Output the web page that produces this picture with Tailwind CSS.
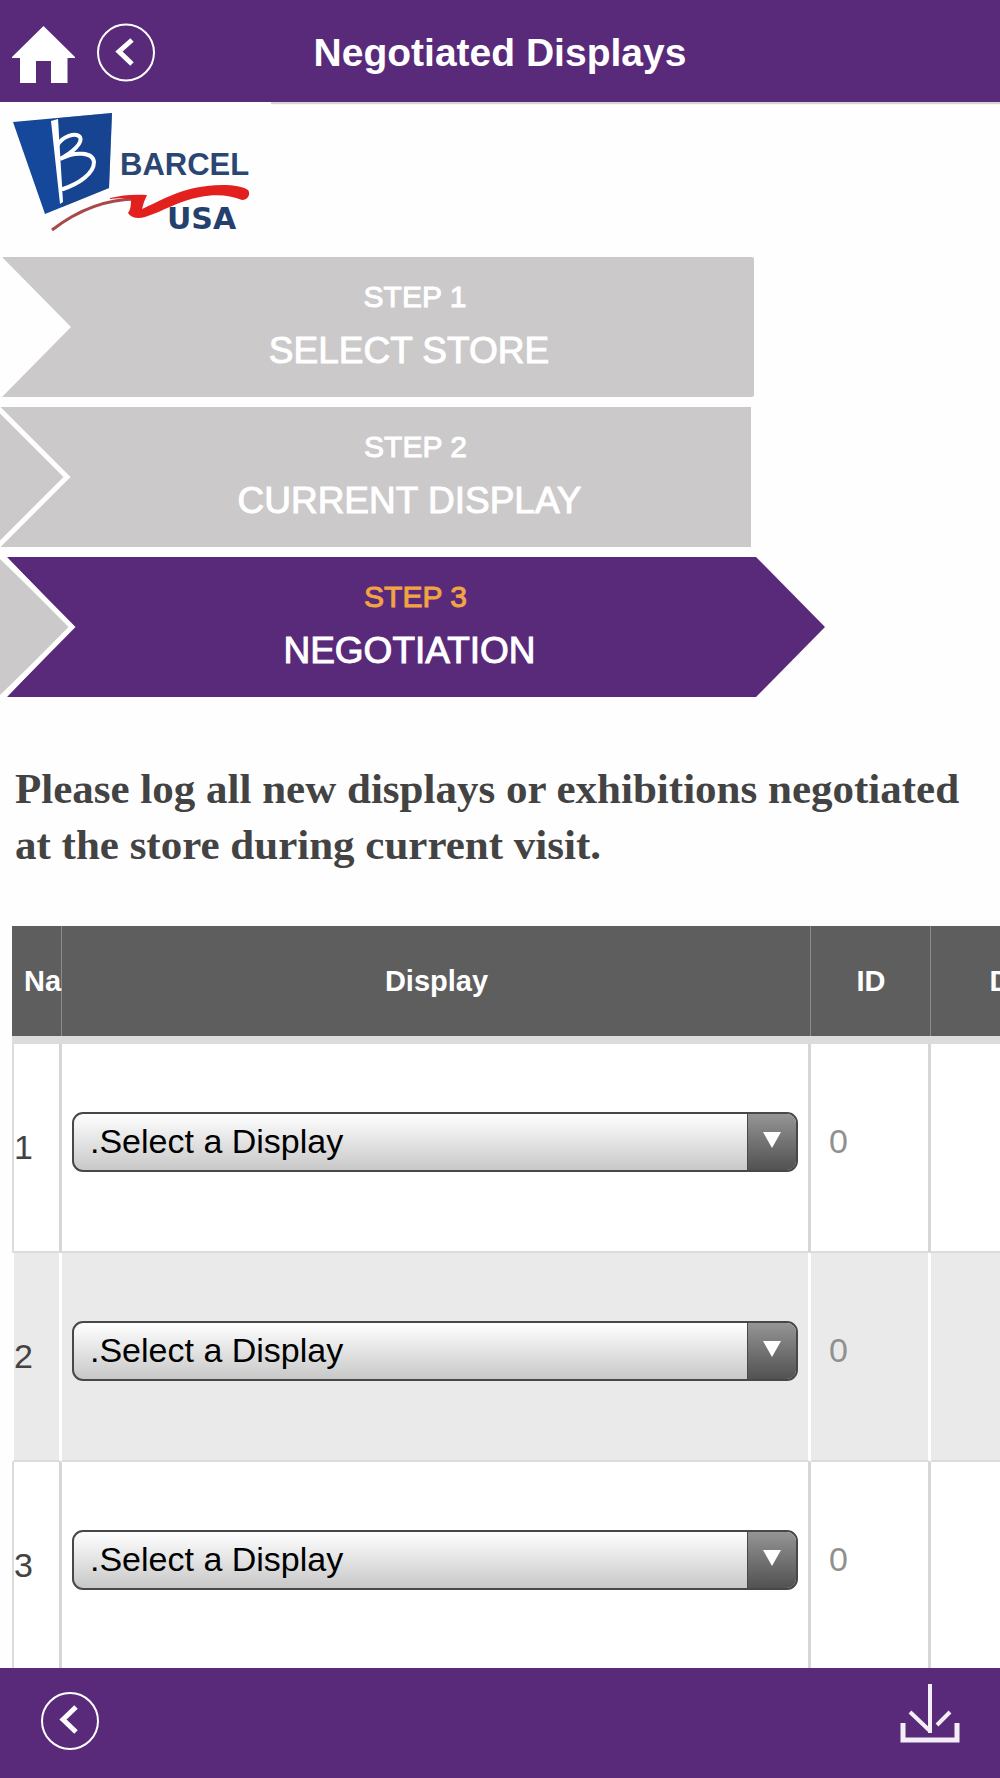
<!DOCTYPE html>
<html lang="en">
<head>
  <meta charset="UTF-8" />
  <meta name="viewport" content="width=device-width, initial-scale=1.0" />
  <title>Negotiated Displays</title>
  <script src="https://cdn.jsdelivr.net/npm/@tailwindcss/browser@4"></script>
</head>
<body class="flex h-screen flex-col overflow-hidden bg-[#fefefe] font-['Liberation_Sans',Arial,sans-serif]">

  <!-- Header -->
  <header class="grid h-[102px] shrink-0 grid-cols-[1fr_auto_1fr] items-center bg-[#5a2a7a] px-3 shadow-[0_2px_1px_#d6d3d8]">
    <nav class="flex items-center gap-5 pt-1">
      <a href="#" aria-label="Home">
        <svg class="block h-[60px] w-16" viewBox="0 0 64 60" fill="#fff">
          <path d="M31.500 3 63 34v1h-7.500v25H39V38H24v22H8V35H0v-1z" />
        </svg>
      </a>
      <a href="#" aria-label="Back">
        <svg class="block size-[60px]" viewBox="0 0 60 60" fill="none" stroke="#fff">
          <circle cx="30" cy="29.500" r="28" stroke-width="2" />
          <path d="M36 17 23 28.500l13 12.500" stroke-width="5" />
        </svg>
      </a>
    </nav>
    <h1 class="pt-1 text-[39px] font-bold text-white">Negotiated Displays</h1>
  </header>

  <main class="min-h-0 flex-1 overflow-hidden">
    <!-- Logo -->
    <svg class="block h-[155px] w-[271px] bg-[#fefefe]" viewBox="0 0 271 155" role="img" aria-label="Barcel USA">
      <path d="M13 20 112 11 109 86 45 112z" fill="#15489b" />
      <path d="M59 16 112 11 109 86 62 105z" fill="#173f86" opacity=".5" />
      <path d="M51 19l7-2 5 83-3 2z" fill="#fff" />
      <path d="M57 44c5-10 19-14 23-9 3 6-7 15-20 22 15-8 33-7 34 3 0 12-16 22-31 27" fill="none" stroke="#fff" stroke-width="4" stroke-linecap="round" />
      <path d="M52 128c22-17 50-31 85-31" fill="none" stroke="#a8484a" stroke-width="3" />
      <path d="M110 96c12-3 24-4 37-3l-3 7-2 7c18-8 37-20 65-23 17-2 34-1 41 4 3 4 0 10-6 10-12-5-27-6-42-3-22 4-36 14-55 20-7 2-14 1-17-4 2-3 3-6 3-14-8-1-14-1-21 0z" fill="#e2211f" />
      <text x="120" y="73" font-size="31" font-weight="700" fill="#2c4674">BARCEL</text>
      <text x="167" y="127" font-size="30" font-weight="700" fill="#24406f" font-family="DejaVu Sans, sans-serif">USA</text>
    </svg>

    <!-- Steps -->
    <ol class="flex flex-col gap-[10px] text-white">
      <li class="flex h-[140px] max-w-[754px]">
        <svg class="w-20 shrink-0" viewBox="0 0 80 140" fill="#cbc9ca"><path d="M2 0h79v140H2l69-70z" /></svg>
        <a href="#" class="flex-1 rounded-r-xs bg-[#cbc9ca] pt-5 pr-4 text-center [-webkit-text-stroke:1px]">
          <span class="block pl-3 text-[30px] leading-10">STEP 1</span>
          <span class="block text-[37px] leading-[68px]">SELECT STORE</span>
        </a>
      </li>
      <li class="flex h-[140px] max-w-[751px]">
        <svg class="w-20 shrink-0" viewBox="0 0 80 140"><path d="M0 0h81v140H0z" fill="#cbc9ca" /><path d="M-3 0 67 70-3 140" fill="none" stroke="#fff" stroke-width="5" /></svg>
        <a href="#" class="flex-1 bg-[#cbc9ca] pt-5 pr-3 text-center [-webkit-text-stroke:1px]">
          <span class="block pl-3 text-[30px] leading-10">STEP 2</span>
          <span class="block text-[37px] leading-[68px]">CURRENT DISPLAY</span>
        </a>
      </li>
      <li class="flex h-[140px] max-w-[825px]" aria-current="step">
        <svg class="w-20 shrink-0" viewBox="0 0 80 140"><path d="M7 0h74v140H7l67-70z" fill="#5a2a7a" /><path d="M0 2 70 70 0 138z" fill="#cbc9ca" /><path d="M3 0 72 70 3 140" fill="none" stroke="#fff" stroke-width="5" /></svg>
        <a href="#" class="flex-1 bg-[#5a2a7a] pt-5 pr-4 text-center [-webkit-text-stroke:1px]">
          <span class="block pl-3 text-[30px] leading-10 text-[#f2a444]">STEP 3</span>
          <span class="block text-[37px] leading-[68px]">NEGOTIATION</span>
        </a>
        <svg class="w-[70px] shrink-0" viewBox="0 0 70 140" fill="#5a2a7a"><path d="M-1 0h2l69 70-69 70h-2z" /></svg>
      </li>
    </ol>

    <h2 class="mt-16 px-[15px] font-['Liberation_Serif','Times_New_Roman',serif] text-[43px] leading-[56px] font-bold text-[#434343]">Please log all new displays or exhibitions negotiated at the store during current visit.</h2>

    <!-- Displays table -->
    <table class="mt-[53px] ml-3 w-[1057px] table-fixed border-separate border-spacing-0 text-[34px] text-[#434343]">
      <thead class="text-[29px] text-white">
        <tr class="h-[118px] *:border-b-8 *:border-b-[#dcdcdc] *:bg-[#5e5e5e] *:p-0 *:shadow-[inset_-1px_0_#8c8c8c]">
          <th class="w-[50px]" scope="col"><span class="block pt-0.5 pl-3 text-left">Na</span></th>
          <th class="w-[749px]" scope="col"><span class="block pt-0.5">Display</span></th>
          <th class="w-[120px]" scope="col"><span class="block pt-0.5">ID</span></th>
          <th class="w-[138px]" scope="col"><span class="block pt-0.5">D</span></th>
        </tr>
      </thead>
      <tbody id="rows"></tbody>
    </table>
  </main>

  <!-- Footer -->
  <footer class="flex h-[110px] shrink-0 items-start justify-between bg-[#5a2a7a] px-10">
    <a href="#" aria-label="Previous step" class="pt-6">
      <svg class="block size-[60px]" viewBox="0 0 60 60" fill="none" stroke="#fff">
        <circle cx="30" cy="29" r="28" stroke-width="2" />
        <path d="M36 15 23 27.500l13 12.500" stroke-width="5" />
      </svg>
    </a>
    <button type="button" aria-label="Save" class="pt-4">
      <svg class="block size-[60px]" viewBox="0 0 60 60" fill="none" stroke="#f4eff7" stroke-width="4">
        <path d="M3 39v17h54V39" stroke-width="5" />
        <path d="M30 0v49" />
        <path d="M10 28l20 19M50 28 37 41" />
      </svg>
    </button>
  </footer>

  <script>
    const rows = document.getElementById("rows");

    for (let i = 1; i <= 3; i++) {
      // Even rows are shaded and use white dividers
      const shade = i % 2 === 0
        ? "*:bg-[#eaeaea] *:border-r-white"
        : "*:bg-white *:border-r-[#d6d6d6]";
      const edge = i % 2 === 0 ? "border-l-white" : "border-l-[#dcdcdc]";

      rows.innerHTML += `
        <tr class="h-[209px] *:border-r-[3px] *:border-b-2 *:border-b-[#dcdcdc] ${shade}">
          <td class="border-l-2 ${edge} p-0">${i}</td>
          <td class="px-[10px] pt-0 pb-3">
            <div class="relative">
              <select aria-label="Display ${i}" class="block h-[60px] w-full appearance-none rounded-[11px] border-2 border-[#484848] bg-linear-to-b from-white to-[#c8c8c8] pr-14 pl-4 text-black">
                <option>.Select a Display</option>
              </select>
              <span class="pointer-events-none absolute inset-y-[2px] right-[2px] flex w-[49px] items-start justify-center rounded-r-[9px] border-l border-[#484848] bg-linear-to-b from-[#959595] to-[#525252] pt-[18px]">
                <svg class="h-4 w-[18px]" viewBox="0 0 18 16" fill="#fff"><path d="M0 0h18L9 16z" /></svg>
              </span>
            </div>
          </td>
          <td class="pt-0 pb-3 pl-[18px]"><input type="text" readonly value="0" aria-label="ID ${i}" class="block w-20 text-[#909090]" /></td>
          <td></td>
        </tr>`;
    }
  </script>
</body>
</html>
